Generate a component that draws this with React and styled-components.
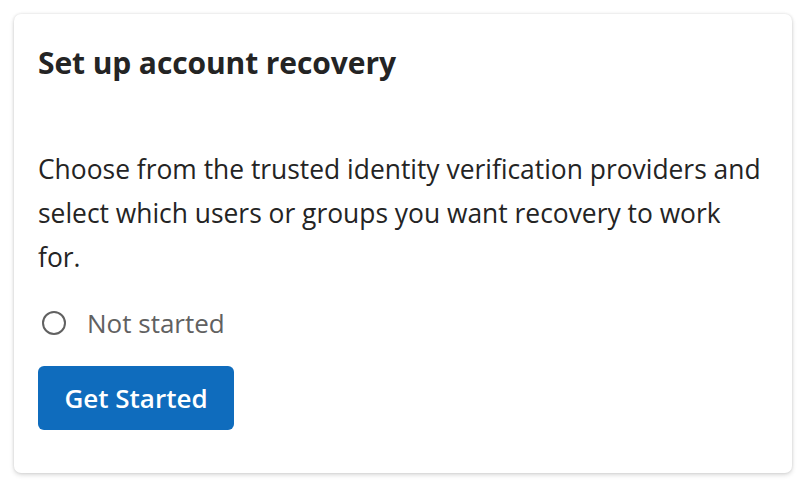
import React from "react";
import styled, { createGlobalStyle } from "styled-components";

const Global = createGlobalStyle`
  html, body { margin: 0; padding: 0; background: #ffffff; }
  body { font-family: "Open Sans", "Noto Sans", sans-serif; }
  * { box-sizing: border-box; }
`;

const Page = styled.div`
  padding: 14px 20px 14px 14px;
`;

const Card = styled.section`
  width: 778px;
  height: 459px;
  background: #ffffff;
  border-radius: 7px;
  box-shadow: 0 0 3px rgba(0, 0, 0, 0.12), 0 2px 5px rgba(0, 0, 0, 0.14);
  padding: 27px 24px 24px 24px;
  display: flex;
  flex-direction: column;
`;

const Title = styled.h2`
  margin: 0;
  font-size: 30px;
  line-height: 44px;
  font-weight: 700;
  color: #242424;
  letter-spacing: -0.1px;
`;

const Body = styled.p`
  margin: 62px 0 0 0;
  font-size: 26.4px;
  line-height: 44px;
  color: #242424;
  max-width: 727px;
`;

const Status = styled.div`
  display: flex;
  align-items: center;
  gap: 21px;
  margin-top: 22px;
  height: 44px;
  color: #616161;
  font-size: 26px;
  padding-left: 4px;
`;

const Circle = styled.span`
  width: 24px;
  height: 24px;
  border-radius: 50%;
  border: 2px solid #616161;
  flex: none;
`;

const Button = styled.button`
  margin-top: 21px;
  align-self: flex-start;
  width: 196px;
  height: 64px;
  border: none;
  border-radius: 6px;
  background: #0f6cbd;
  color: #ffffff;
  font-family: "Open Sans", "Noto Sans", sans-serif;
  font-size: 26px;
  font-weight: 600;
  cursor: pointer;
`;

export default function App() {
  return (
    <>
      <Global />
      <Page>
        <Card>
          <Title>Set up account recovery</Title>
          <Body>
            Choose from the trusted identity verification providers and select which users or groups you want recovery to work for.
          </Body>
          <Status>
            <Circle />
            Not started
          </Status>
          <Button>Get Started</Button>
        </Card>
      </Page>
    </>
  );
}
